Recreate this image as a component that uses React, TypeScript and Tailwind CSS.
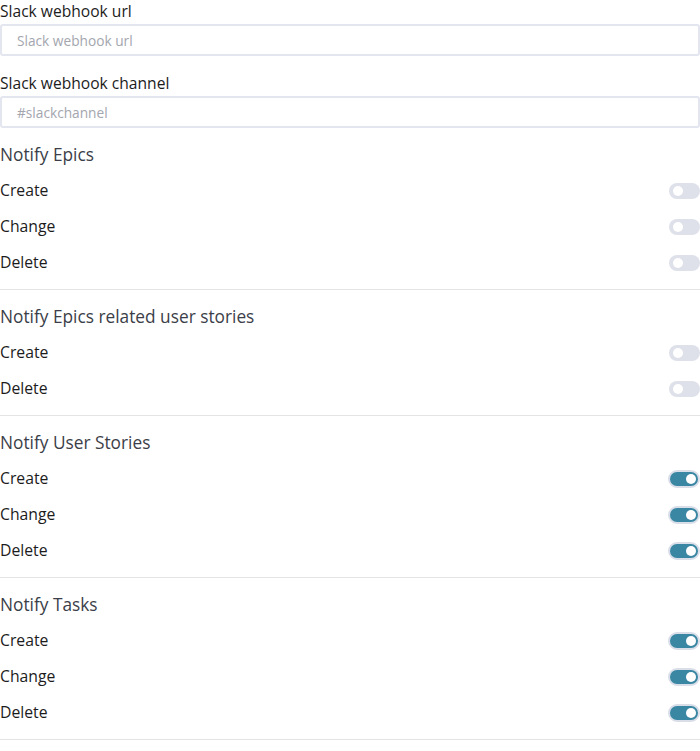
import React from 'react';

type Section = {
  title: string;
  items: { label: string; on: boolean }[];
};

const sections: Section[] = [
  {
    title: 'Notify Epics',
    items: [
      { label: 'Create', on: false },
      { label: 'Change', on: false },
      { label: 'Delete', on: false },
    ],
  },
  {
    title: 'Notify Epics related user stories',
    items: [
      { label: 'Create', on: false },
      { label: 'Delete', on: false },
    ],
  },
  {
    title: 'Notify User Stories',
    items: [
      { label: 'Create', on: true },
      { label: 'Change', on: true },
      { label: 'Delete', on: true },
    ],
  },
  {
    title: 'Notify Tasks',
    items: [
      { label: 'Create', on: true },
      { label: 'Change', on: true },
      { label: 'Delete', on: true },
    ],
  },
];

function Toggle({ on }: { on: boolean }) {
  if (on) {
    return (
      <span className="flex h-[18px] w-[32px] items-center justify-end rounded-full border-2 border-[#d9dee9] bg-[#3a87a4] pr-[2px]">
        <span className="h-[10px] w-[10px] rounded-full bg-white" />
      </span>
    );
  }
  return (
    <span className="flex h-[16px] w-[31px] items-center rounded-full bg-[#dfe1ea] pl-[4px]">
      <span className="h-[10px] w-[10px] rounded-full bg-white" />
    </span>
  );
}

function Field({ label, placeholder }: { label: string; placeholder: string }) {
  return (
    <div>
      <div className="h-[22px] text-[15.6px] leading-[22px] text-[#1c1c1c]">{label}</div>
      <input
        className="mt-[2px] h-8 w-full rounded-[3px] border-2 border-[#e3e6ef] px-[15px] text-[13.7px] text-[#222] outline-none placeholder:text-[#a3a6ae]"
        placeholder={placeholder}
      />
    </div>
  );
}

export default function App() {
  return (
    <div
      className="w-[700px] bg-white"
      style={{ fontFamily: '"Open Sans", "Noto Sans", sans-serif' }}
    >
      <Field label="Slack webhook url" placeholder="Slack webhook url" />
      <div className="mt-4">
        <Field label="Slack webhook channel" placeholder="#slackchannel" />
      </div>

      {sections.map((section) => (
        <div key={section.title} className="border-b border-[#e4e4e4] pt-[9px] pb-2">
          <div className="flex h-9 items-center text-[17.3px] text-[#3b3e48]">{section.title}</div>
          {section.items.map((item) => (
            <div key={item.label} className="flex h-9 items-center justify-between">
              <span className="text-[15.75px] text-[#1c1c1c]">{item.label}</span>
              <Toggle on={item.on} />
            </div>
          ))}
        </div>
      ))}
    </div>
  );
}
